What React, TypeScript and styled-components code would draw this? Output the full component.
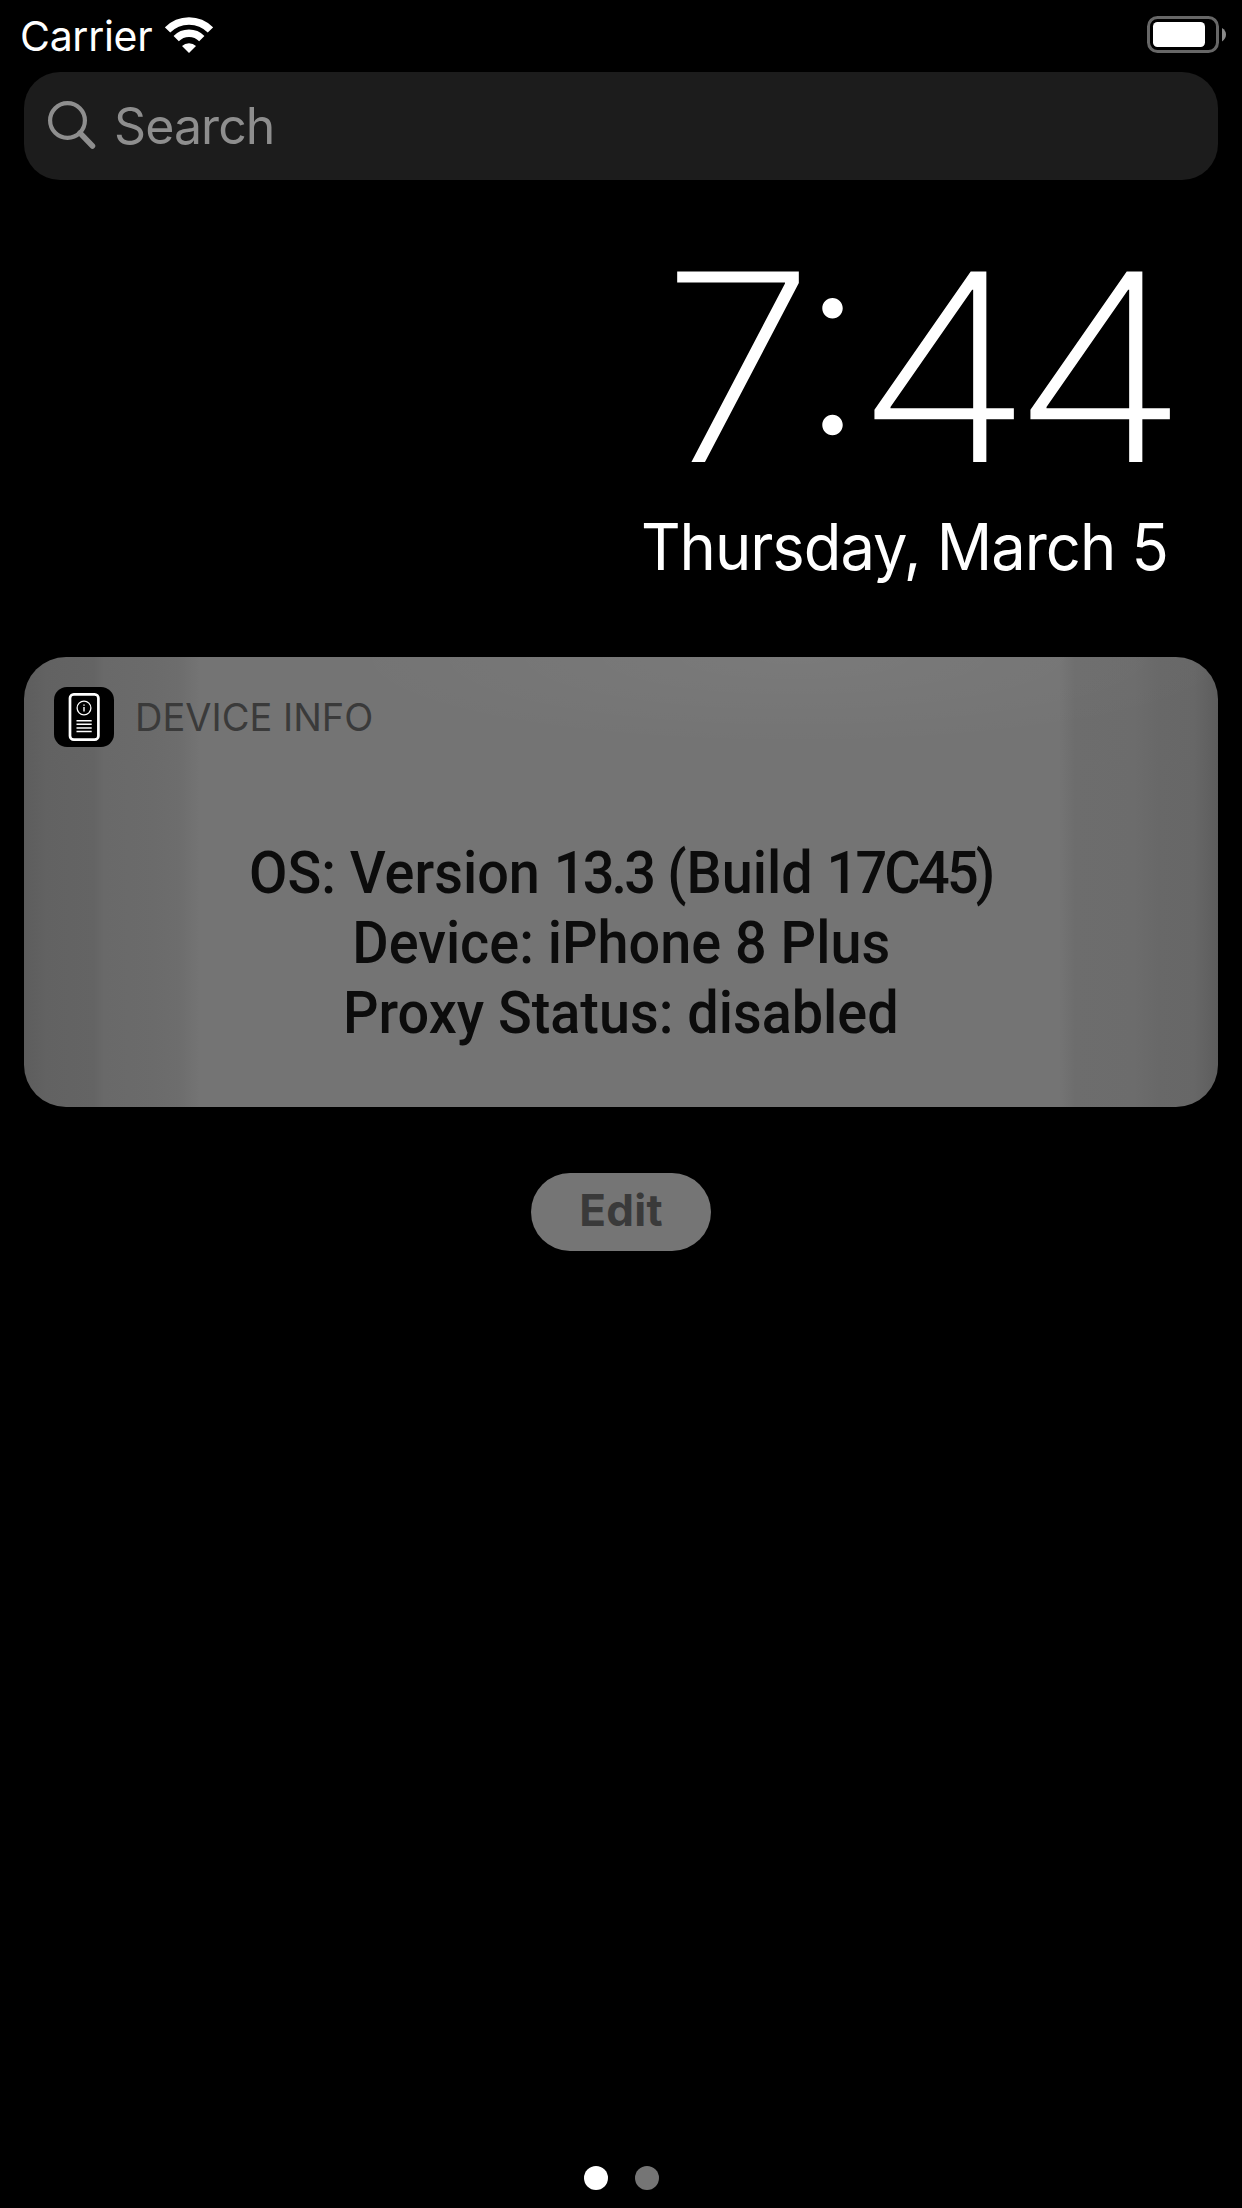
import React from 'react';
import styled, { createGlobalStyle } from 'styled-components';

const Global = createGlobalStyle`
  * { box-sizing: border-box; }
  html, body { margin: 0; background: #000; }
  body { font-family: Inter, "Liberation Sans", sans-serif; }
`;

const Screen = styled.main`
  width: 1242px;
  height: 2208px;
  background: #000;
  color: #fff;
  display: flex;
  flex-direction: column;
  overflow: hidden;
`;

const StatusBar = styled.header`
  height: 72px;
  flex: none;
  display: flex;
  align-items: flex-start;
  justify-content: space-between;
  padding: 16px 15px 0 20px;
`;

const CarrierGroup = styled.div`
  display: flex;
  align-items: flex-start;
  gap: 12.5px;
`;

const Label = styled.span<{ $size: number; $line: number; $weight?: number; $color?: string; $track?: number }>`
  font-size: ${p => p.$size}px;
  line-height: ${p => p.$line}px;
  font-weight: ${p => p.$weight ?? 400};
  color: ${p => p.$color ?? '#fff'};
  letter-spacing: ${p => p.$track ?? 0}px;
  white-space: pre;
`;

const SearchField = styled.div`
  height: 108px;
  flex: none;
  margin: 0 24px;
  border-radius: 36px;
  background: #1c1c1c;
  display: flex;
  align-items: center;
  padding: 0 0 0 24px;
  gap: 16px;
`;

const Clock = styled.section`
  height: 477px;
  flex: none;
  display: flex;
  flex-direction: column;
  align-items: flex-end;
  padding: 62px 74px 0 0;
`;

const Time = styled.div`
  display: flex;
  height: 267px;
  margin-right: -10px;
  font-size: 262px;
  line-height: 250px;
  font-weight: 230;
`;

const Glyph = styled.span<{ $width: number; $stretch?: number; $lift?: number }>`
  width: ${p => p.$width}px;
  display: flex;
  justify-content: center;
  transform: translateY(${p => -(p.$lift ?? 0)}px) scaleX(${p => p.$stretch ?? 1});
`;

const DateText = styled(Label)`
  transform: scaleX(0.96);
  transform-origin: right;
`;

const Card = styled.section`
  height: 450px;
  flex: none;
  margin: 0 24px;
  border-radius: 42px;
  padding: 30px;
  background:
    radial-gradient(ellipse 460px 90px at 770px 0, rgba(255,255,255,.045), transparent),
    linear-gradient(90deg, #5d5d5d 0, #626262 22px, #646464 70px, #696969 80px, #6b6b6b 130px, #6d6d6d 155px, #747474 176px,
      #747474 1035px, #6d6d6d 1051px, #6c6c6c 1110px, #686868 1135px, #676767 1170px, #5d5d5d 1194px);
`;

const CardHeader = styled.div`
  display: flex;
  align-items: center;
  height: 60px;
  gap: 21px;
`;

const Details = styled.div`
  display: flex;
  flex-direction: column;
  align-items: center;
  padding-top: 91px;
`;

const Detail = styled.div`
  font-family: Roboto, sans-serif;
  font-weight: 500;
  font-size: 60px;
  line-height: 70px;
  color: #0c0c0c;
  white-space: pre;
  transform: scaleX(0.93);
`;

const Figures = styled.span`
  letter-spacing: -3px;
`;

const EditButton = styled.button`
  align-self: center;
  flex: none;
  width: 180px;
  height: 78px;
  margin-top: 66px;
  border: 0;
  border-radius: 39px;
  background: #757575;
  font-family: inherit;
  padding: 0 0 3px;
`;

const Dots = styled.nav`
  margin-top: auto;
  display: flex;
  justify-content: center;
  gap: 27px;
  padding-bottom: 18px;
`;

const Dot = styled.span<{ $active?: boolean }>`
  width: 24px;
  height: 24px;
  border-radius: 50%;
  background: ${p => (p.$active ? '#fff' : '#757575')};
`;

const WifiIcon = () => (
  <svg width="48" height="38" viewBox="0 0 48 38">
    <g fill="none" stroke="#fff" strokeWidth="7.4">
      <path d="M2.6 14 A30 30 0 0 1 45.4 14" />
      <path d="M11.2 22.6 A18 18 0 0 1 36.8 22.6" />
    </g>
    <path d="M24 37 L17 30 A10 10 0 0 1 31 30 Z" fill="#fff" />
  </svg>
);

const BatteryIcon = () => (
  <svg width="80" height="38" viewBox="0 0 80 38">
    <rect x="1.5" y="1.5" width="69" height="34" rx="9" fill="none" stroke="#676767" strokeWidth="3" />
    <rect x="6" y="6" width="52" height="25" rx="4.5" fill="#fff" />
    <path d="M75 12 Q79 14.5 79 18.5 Q79 22.5 75 25.5 Z" fill="#8a8a8a" />
  </svg>
);

const SearchIcon = () => (
  <svg width="50" height="50" viewBox="0 0 50 50">
    <g fill="none" stroke="#8e8e8e" strokeWidth="4.2">
      <circle cx="19.5" cy="19.5" r="17.4" />
      <path d="M32 32 L44.5 45" strokeWidth="5.5" strokeLinecap="round" />
    </g>
  </svg>
);

const DeviceIcon = () => (
  <svg width="60" height="60" viewBox="0 0 60 60">
    <rect width="60" height="60" rx="13" fill="#000" />
    <rect x="16" y="7.3" width="28.4" height="45.4" rx="3.8" fill="none" stroke="#fff" strokeWidth="2.7" />
    <circle cx="30" cy="21" r="6.9" fill="none" stroke="#fff" strokeWidth="1.3" />
    <path d="M30 20V24.5M30 17.5V18.8" stroke="#fff" strokeWidth="1.4" />
    <path d="M22.5 33.7H37.7M22.5 37.3H37.7M22.5 41H37.7M22.5 44.5H37.7" stroke="#fff" strokeWidth="1.4" />
  </svg>
);

export default function App() {
  return (
    <Screen>
      <Global />
      <StatusBar>
        <CarrierGroup>
          <Label $size={41} $line={40} $track={-0.3}>Carrier</Label>
          <WifiIcon />
        </CarrierGroup>
        <BatteryIcon />
      </StatusBar>
      <SearchField>
        <SearchIcon />
        <Label $size={50} $line={60} $color="#8e8e8e" $track={-0.9}>Search</Label>
      </SearchField>
      <Clock>
        <Time>
          <Glyph $width={122} $stretch={1.06}>7</Glyph>
          <Glyph $width={67} $lift={28}>:</Glyph>
          <Glyph $width={156} $stretch={1.12}>4</Glyph>
          <Glyph $width={156} $stretch={1.12}>4</Glyph>
        </Time>
        <DateText $size={64} $line={76} $track={-1.05}>Thursday, March 5</DateText>
      </Clock>
      <Card>
        <CardHeader>
          <DeviceIcon />
          <Label $size={38} $line={62} $color="#3a3a3a">DEVICE INFO</Label>
        </CardHeader>
        <Details>
          <Detail>OS: Version <Figures>13.3</Figures> (Build <Figures>17C45)</Figures></Detail>
          <Detail>Device: iPhone 8 Plus</Detail>
          <Detail>Proxy Status: disabled</Detail>
        </Details>
      </Card>
      <EditButton><Label $size={44} $line={75} $weight={700} $color="#3a3a3a" $track={0.3}>Edit</Label></EditButton>
      <Dots><Dot $active /><Dot /></Dots>
    </Screen>
  );
}
